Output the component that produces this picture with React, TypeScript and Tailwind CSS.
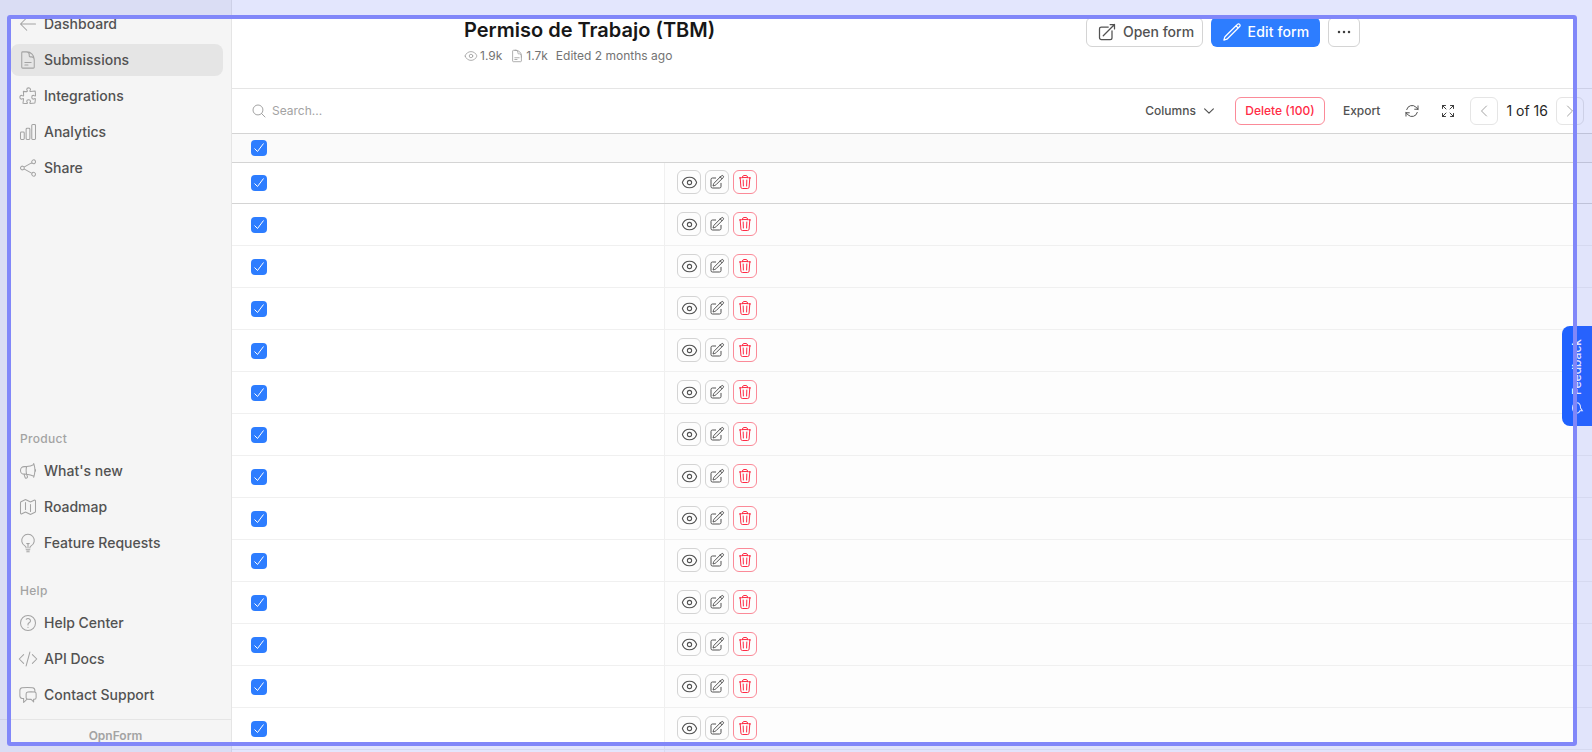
import type { ComponentType, ReactNode } from "react";
import {
  HiOutlineArrowLeft,
  HiOutlineArrowPath,
  HiOutlineArrowTopRightOnSquare,
  HiOutlineArrowsPointingOut,
  HiOutlineChartBar,
  HiOutlineChatBubbleLeftRight,
  HiOutlineChevronDown,
  HiOutlineChevronLeft,
  HiOutlineChevronRight,
  HiOutlineCodeBracket,
  HiOutlineDocumentText,
  HiOutlineEllipsisHorizontal,
  HiOutlineEye,
  HiOutlineLightBulb,
  HiOutlineMagnifyingGlass,
  HiOutlineMap,
  HiOutlineMegaphone,
  HiOutlinePencil,
  HiOutlinePencilSquare,
  HiOutlinePuzzlePiece,
  HiOutlineQuestionMarkCircle,
  HiOutlineShare,
  HiOutlineTrash,
} from "react-icons/hi2";

type IconType = ComponentType<{ className?: string }>;

const rowCount = 15;

function NavItem({ icon: Icon, label, active }: { icon: IconType; label: string; active?: boolean }) {
  return (
    <div
      className={`mx-[11px] flex h-8 w-[212px] items-center gap-[6px] rounded-lg pl-[7px] text-sm font-medium text-[#525252] ${
        active ? "bg-[#e5e5e5]" : ""
      }`}
    >
      <Icon className="h-5 w-5 shrink-0 text-[#a3a3a3] [&_path]:stroke-[1.25]" />
      {label}
    </div>
  );
}

function NavLabel({ children, className }: { children: ReactNode; className?: string }) {
  return <div className={`pl-5 text-xs font-medium tracking-wide text-[#a3a3a3] ${className ?? ""}`}>{children}</div>;
}

function Sidebar() {
  return (
    <aside className="flex h-full w-[232px] shrink-0 flex-col border-r border-[#e5e5e5] bg-[#f5f5f5] pt-2">
      <div className="flex flex-col gap-1">
        <NavItem icon={HiOutlineArrowLeft} label="Dashboard" />
        <NavItem icon={HiOutlineDocumentText} label="Submissions" active />
        <NavItem icon={HiOutlinePuzzlePiece} label="Integrations" />
        <NavItem icon={HiOutlineChartBar} label="Analytics" />
        <NavItem icon={HiOutlineShare} label="Share" />
      </div>
      <NavLabel className="mt-auto mb-[8px]">Product</NavLabel>
      <div className="flex flex-col gap-1">
        <NavItem icon={HiOutlineMegaphone} label="What's new" />
        <NavItem icon={HiOutlineMap} label="Roadmap" />
        <NavItem icon={HiOutlineLightBulb} label="Feature Requests" />
      </div>
      <NavLabel className="mt-[24px] mb-[8px]">Help</NavLabel>
      <div className="flex flex-col gap-1">
        <NavItem icon={HiOutlineQuestionMarkCircle} label="Help Center" />
        <NavItem icon={HiOutlineCodeBracket} label="API Docs" />
        <NavItem icon={HiOutlineChatBubbleLeftRight} label="Contact Support" />
      </div>
      <div className="mt-2 flex h-[33px] items-center justify-center border-t border-[#e5e5e5] text-xs font-semibold text-[#a3a3a3]">
        OpnForm
      </div>
    </aside>
  );
}

function FormHeader() {
  return (
    <header className="flex h-[89px] shrink-0 justify-between border-b border-[#e5e5e5] pr-[232px] pl-[232px]">
      <div className="pt-4">
        <h1 className="text-xl leading-7 font-semibold text-[#171717]">Permiso de Trabajo (TBM)</h1>
        <div className="mt-[2px] flex items-center text-xs leading-5 text-[#737373]">
          <HiOutlineEye className="mr-[2px] h-3.5 w-3.5 text-[#a3a3a3]" />
          1.9k
          <HiOutlineDocumentText className="mr-[2px] ml-2 h-3.5 w-3.5 text-[#a3a3a3]" />
          1.7k
          <span className="ml-2">Edited 2 months ago</span>
        </div>
      </div>
      <div className="mt-[17px] flex h-[30px] gap-2">
        <button className="flex w-[117px] items-center justify-center gap-[6px] rounded-md border border-[#d4d4d4] pl-[2px] text-sm font-medium text-[#525252]">
          <HiOutlineArrowTopRightOnSquare className="h-5 w-5" />
          Open form
        </button>
        <button className="flex w-[109px] items-center justify-center gap-[6px] rounded-md bg-[#2d7dff] text-sm font-medium tracking-[0.01em] text-white">
          <HiOutlinePencil className="h-5 w-5" />
          Edit form
        </button>
        <button className="flex w-8 items-center justify-center rounded-md border border-[#d4d4d4] text-[#404040]">
          <HiOutlineEllipsisHorizontal className="h-5 w-5" />
        </button>
      </div>
    </header>
  );
}

function Toolbar() {
  return (
    <div className="flex h-[44px] shrink-0 items-center pr-2 pl-[19px]">
      <HiOutlineMagnifyingGlass className="h-4 w-4 text-[#a3a3a3]" />
      <span className="ml-[5px] text-xs text-[#a3a3a3]">Search...</span>
      <div className="ml-auto flex items-center text-xs font-medium text-[#525252]">
        <span>Columns</span>
        <HiOutlineChevronDown className="ml-[6px] h-3.5 w-3.5 [&_path]:stroke-2" />
        <button className="ml-[19px] h-7 w-[90px] rounded-md border border-[#fb8a98] text-xs font-medium text-[#ff2b45]">
          Delete (100)
        </button>
        <span className="ml-[18px]">Export</span>
        <HiOutlineArrowPath className="ml-6 h-4 w-4 text-[#525252]" />
        <HiOutlineArrowsPointingOut className="ml-[20px] h-4 w-4 text-[#404040]" />
        <button className="ml-[14px] flex h-7 w-7 items-center justify-center rounded-md border border-[#e5e5e5] text-[#a3a3a3]">
          <HiOutlineChevronLeft className="h-4 w-4" />
        </button>
        <span className="mx-2 text-sm font-normal text-[#262626]">1 of 16</span>
        <button className="flex h-7 w-7 items-center justify-center rounded-md border border-[#e5e5e5] text-[#a3a3a3]">
          <HiOutlineChevronRight className="h-4 w-4" />
        </button>
      </div>
    </div>
  );
}

function Checkbox() {
  return (
    <span className="flex h-4 w-4 items-center justify-center rounded-[4px] bg-[#2d7dff]">
      <svg viewBox="0 0 16 16" className="h-4 w-4" fill="none" stroke="white" strokeWidth="1">
        <path d="M3.5 8.500 6.500 11.500 12.500 3.500" />
      </svg>
    </span>
  );
}

function ActionButton({ icon: Icon, danger, iconClass }: { icon: IconType; danger?: boolean; iconClass: string }) {
  return (
    <button
      className={`flex h-6 w-6 items-center justify-center rounded-md border ${
        danger ? "border-[#fb8a98] text-[#ff2b45]" : "border-[#d4d4d4] text-[#525252]"
      }`}
    >
      <Icon className={iconClass} />
    </button>
  );
}

function Row({ index }: { index: number }) {
  const first = index === 0;
  return (
    <div className={`flex shrink-0 border-b ${first ? "h-[41px] border-[#d4d4d4]" : "h-[42px] border-[#f0f0f0]"}`}>
      <div className="flex w-[432px] items-center pl-[19px]">
        <Checkbox />
      </div>
      <div
        className={`flex flex-1 items-center gap-1 border-l border-[#f0f0f0] bg-[#fdfdfd] pl-3 ${
          first ? "pb-[2px]" : "pb-[1px]"
        }`}
      >
        <ActionButton icon={HiOutlineEye} iconClass="h-[17px] w-[17px]" />
        <ActionButton icon={HiOutlinePencilSquare} iconClass="h-4 w-4" />
        <ActionButton icon={HiOutlineTrash} iconClass="h-4 w-4" danger />
      </div>
    </div>
  );
}

function FeedbackTab() {
  return (
    <div className="absolute top-[326px] right-0 flex h-[100px] w-[30px] items-center justify-center rounded-l-lg bg-[#1f62ff]">
      <div className="flex translate-y-[3px] -rotate-90 items-center gap-1.5 pl-1 text-xs font-medium whitespace-nowrap text-white">
        <svg viewBox="0 0 16 16" className="h-3.5 w-3.5" fill="none" stroke="white" strokeWidth="1.2">
          <path d="M2 7.500C2 4.500 4.500 3 8 3s6 1.500 6 4.500S11.500 12 8 12l-3 2v-2.600C3 10.600 2 9.300 2 7.500Z" />
        </svg>
        Feedback
      </div>
    </div>
  );
}

export default function App() {
  return (
    <div className="relative flex h-[752px] w-[1592px] overflow-hidden bg-white font-[Inter,sans-serif] antialiased">
      <Sidebar />
      <main className="flex min-w-0 flex-1 flex-col">
        <FormHeader />
        <Toolbar />
        <div className="h-[30px] shrink-0 border-y border-[#d4d4d4] bg-[#fafafa] pt-[6px] pl-[19px]">
          <Checkbox />
        </div>
        {Array.from({ length: rowCount }, (_, index) => (
          <Row key={index} index={index} />
        ))}
      </main>
      <FeedbackTab />
      {/* highlight frame laid over the capture */}
      <div className="pointer-events-none absolute top-[15px] left-[7px] h-[731px] w-[1570px] rounded-[3px] border-4 border-[#8187f9] shadow-[0_0_0_2000px_rgba(79,100,240,0.16)]" />
    </div>
  );
}
